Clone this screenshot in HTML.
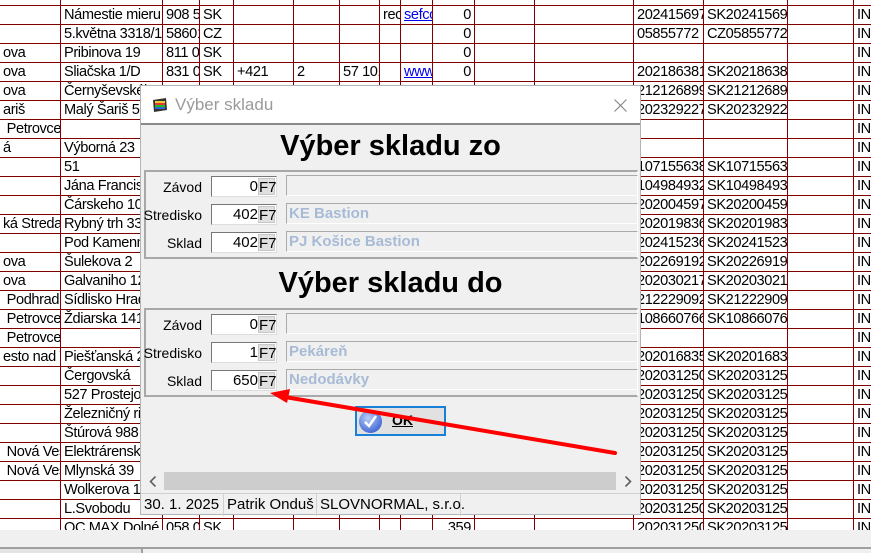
<!DOCTYPE html>
<html><head><meta charset="utf-8"><style>
*{margin:0;padding:0;box-sizing:border-box}
body{width:871px;height:553px;overflow:hidden;background:#fff;font-family:"Liberation Sans",sans-serif;position:relative}
table{position:absolute;left:-1px;top:-14px;width:894px;border-collapse:collapse;table-layout:fixed;font-size:14.6px;letter-spacing:-0.4px;color:#000}
td{border:1px solid #800000;height:19px;padding:0 0 0 3px;white-space:nowrap;overflow:hidden;line-height:17px}
td.r{text-align:right;padding:0 3px 0 0}
td.l a{color:#00e;text-decoration:underline}
#bot{position:absolute;left:0;top:530px;width:871px;height:23px;background:#f0f0f0}
#bot .ln{position:absolute;left:0;top:17px;width:871px;height:2px;background:#a0a0a0}
#bot .tb{position:absolute;left:0;top:19px;width:143px;height:4px;background:#e4e4e4;border-right:2px solid #a0a0a0}
#dlg{position:absolute;left:140px;top:85px;width:501px;height:430px;background:#f0f0f0;border:1px solid #b4b4b4}
#tt{position:absolute;left:0;top:0;width:499px;height:39px;background:#fff;border-bottom:2px solid #8a8a8a}
#tt span{position:absolute;left:34px;top:9px;font-size:17px;color:#9a9a9a}
h1{position:absolute;left:0;width:499px;text-align:center;font-size:29px;font-weight:bold;color:#000}
.grp{position:absolute;left:3px;width:494px;height:89px;border:2px solid #a8a8a8;border-right:1px solid #fff}
.lab{position:absolute;left:-4px;width:60px;text-align:right;font-size:14px;white-space:nowrap}
.in{position:absolute;left:65px;width:66px;height:21px;background:#fff;border:1px solid #777;border-right-color:#ddd;border-bottom-color:#ddd;font-size:15px;text-align:right;padding-right:18px;line-height:19px}
.in b{position:absolute;right:1px;top:1px;width:17px;height:17px;background:#e0e0e0;font-weight:normal;font-size:15px;line-height:17px;text-align:center;border:1px solid #c8c8c8}
.ds{position:absolute;left:140px;width:352px;height:21px;border:1px solid #aaa;border-right-color:#fff;border-bottom-color:#fff;font-size:15px;font-weight:bold;color:#a7bbd6;padding-left:2px;line-height:19px}
#ok{position:absolute;left:214px;top:320px;width:91px;height:30px;border:2px solid #1a7fd6;background:#e1e1e1}
#ok .c{position:absolute;left:2px;top:2px;width:23px;height:23px;border-radius:50%;background:radial-gradient(circle at 40% 35%,#b8cdf8,#4a6fd8 70%,#2c4aa8)}
#ok span{position:absolute;left:35px;top:4px;font-size:14px;font-weight:bold;text-decoration:underline}
#sb{position:absolute;left:1px;top:384px;width:497px;height:22px;background:#f0f0f0}
#sb .tr{position:absolute;left:22px;top:2px;width:452px;height:18px;background:#cdcdcd}
#st{position:absolute;left:0;top:407px;width:499px;height:22px;border-top:1px solid #d0d0d0;font-size:15px;line-height:22px;white-space:nowrap}
#st span{position:absolute;top:0;padding-left:3px;border-right:1px solid #d0d0d0;height:22px}
</style></head><body>
<table>
<colgroup><col style="width:61px"><col style="width:102px"><col style="width:37px"><col style="width:34px"><col style="width:60px"><col style="width:46px"><col style="width:40px"><col style="width:21px"><col style="width:32px"><col style="width:42px"><col style="width:60px"><col style="width:99px"><col style="width:70px"><col style="width:84px"><col style="width:66px"><col style="width:40px"></colgroup>
<tr><td>Petrovce</td><td>Grafická 12</td><td>900 1</td><td>SK</td><td></td><td></td><td></td><td></td><td></td><td class="r">0</td><td></td><td></td><td>2021456111</td><td>SK2021456111</td><td></td><td>INE</td></tr>
<tr><td></td><td>Námestie mieru 2</td><td>908 51</td><td>SK</td><td></td><td></td><td></td><td>rec</td><td class="l"><a>sefco</a></td><td class="r">0</td><td></td><td></td><td>2024156971</td><td>SK2024156970</td><td></td><td>INE</td></tr>
<tr><td></td><td>5.května 3318/16</td><td>58601</td><td>CZ</td><td></td><td></td><td></td><td></td><td></td><td class="r">0</td><td></td><td></td><td>05855772</td><td>CZ05855772</td><td></td><td>INE</td></tr>
<tr><td>ova</td><td>Pribinova 19</td><td>811 09</td><td>SK</td><td></td><td></td><td></td><td></td><td></td><td class="r">0</td><td></td><td></td><td></td><td></td><td></td><td>INE</td></tr>
<tr><td>ova</td><td>Sliačska 1/D</td><td>831 02</td><td>SK</td><td>+421</td><td>2</td><td>57 101</td><td></td><td class="l"><a>www</a></td><td class="r">0</td><td></td><td></td><td>2021863811</td><td>SK2021863811</td><td></td><td>INE</td></tr>
<tr><td>ova</td><td>Černyševského</td><td></td><td></td><td></td><td></td><td></td><td></td><td></td><td></td><td></td><td></td><td>2121268996</td><td>SK2121268996</td><td></td><td>INE</td></tr>
<tr><td>ariš</td><td>Malý Šariš 58</td><td></td><td></td><td></td><td></td><td></td><td></td><td></td><td></td><td></td><td></td><td>2023292271</td><td>SK2023292271</td><td></td><td>INE</td></tr>
<tr><td>&nbsp;Petrovce</td><td></td><td></td><td></td><td></td><td></td><td></td><td></td><td></td><td></td><td></td><td></td><td></td><td></td><td></td><td>INE</td></tr>
<tr><td>á</td><td>Výborná 23</td><td></td><td></td><td></td><td></td><td></td><td></td><td></td><td></td><td></td><td></td><td></td><td></td><td></td><td>INE</td></tr>
<tr><td></td><td>51</td><td></td><td></td><td></td><td></td><td></td><td></td><td></td><td></td><td></td><td></td><td>1071556387</td><td>SK1071556387</td><td></td><td>INE</td></tr>
<tr><td></td><td>Jána Francisci</td><td></td><td></td><td></td><td></td><td></td><td></td><td></td><td></td><td></td><td></td><td>1049849328</td><td>SK1049849328</td><td></td><td>INE</td></tr>
<tr><td></td><td>Čárskeho 10</td><td></td><td></td><td></td><td></td><td></td><td></td><td></td><td></td><td></td><td></td><td>2020045973</td><td>SK2020045973</td><td></td><td>INE</td></tr>
<tr><td>ká Streda</td><td>Rybný trh 333</td><td></td><td></td><td></td><td></td><td></td><td></td><td></td><td></td><td></td><td></td><td>2020198367</td><td>SK2020198367</td><td></td><td>INE</td></tr>
<tr><td></td><td>Pod Kamennou</td><td></td><td></td><td></td><td></td><td></td><td></td><td></td><td></td><td></td><td></td><td>2024152361</td><td>SK2024152361</td><td></td><td>INE</td></tr>
<tr><td>ova</td><td>Šulekova 2</td><td></td><td></td><td></td><td></td><td></td><td></td><td></td><td></td><td></td><td></td><td>2022691924</td><td>SK2022691924</td><td></td><td>INE</td></tr>
<tr><td>ova</td><td>Galvaniho 12</td><td></td><td></td><td></td><td></td><td></td><td></td><td></td><td></td><td></td><td></td><td>2020302174</td><td>SK2020302174</td><td></td><td>INE</td></tr>
<tr><td>&nbsp;Podhradie</td><td>Sídlisko Hrad</td><td></td><td></td><td></td><td></td><td></td><td></td><td></td><td></td><td></td><td></td><td>2122290929</td><td>SK2122290929</td><td></td><td>INE</td></tr>
<tr><td>&nbsp;Petrovce</td><td>Ždiarska 141/</td><td></td><td></td><td></td><td></td><td></td><td></td><td></td><td></td><td></td><td></td><td>1086607665</td><td>SK1086607665</td><td></td><td>INE</td></tr>
<tr><td>&nbsp;Petrovce</td><td></td><td></td><td></td><td></td><td></td><td></td><td></td><td></td><td></td><td></td><td></td><td></td><td></td><td></td><td>INE</td></tr>
<tr><td>esto nad V</td><td>Piešťanská 23</td><td></td><td></td><td></td><td></td><td></td><td></td><td></td><td></td><td></td><td></td><td>2020168359</td><td>SK2020168359</td><td></td><td>INE</td></tr>
<tr><td></td><td>Čergovská</td><td></td><td></td><td></td><td></td><td></td><td></td><td></td><td></td><td></td><td></td><td>2020312503</td><td>SK2020312503</td><td></td><td>INE</td></tr>
<tr><td></td><td>527 Prostejov</td><td></td><td></td><td></td><td></td><td></td><td></td><td></td><td></td><td></td><td></td><td>2020312503</td><td>SK2020312503</td><td></td><td>INE</td></tr>
<tr><td></td><td>Železničný ria</td><td></td><td></td><td></td><td></td><td></td><td></td><td></td><td></td><td></td><td></td><td>2020312503</td><td>SK2020312503</td><td></td><td>INE</td></tr>
<tr><td></td><td>Štúrová 988</td><td></td><td></td><td></td><td></td><td></td><td></td><td></td><td></td><td></td><td></td><td>2020312503</td><td>SK2020312503</td><td></td><td>INE</td></tr>
<tr><td>&nbsp;Nová Ves</td><td>Elektrárenská</td><td></td><td></td><td></td><td></td><td></td><td></td><td></td><td></td><td></td><td></td><td>2020312503</td><td>SK2020312503</td><td></td><td>INE</td></tr>
<tr><td>&nbsp;Nová Ves</td><td>Mlynská 39</td><td></td><td></td><td></td><td></td><td></td><td></td><td></td><td></td><td></td><td></td><td>2020312503</td><td>SK2020312503</td><td></td><td>INE</td></tr>
<tr><td></td><td>Wolkerova 15</td><td></td><td></td><td></td><td></td><td></td><td></td><td></td><td></td><td></td><td></td><td>2020312503</td><td>SK2020312503</td><td></td><td>INE</td></tr>
<tr><td></td><td>L.Svobodu</td><td></td><td></td><td></td><td></td><td></td><td></td><td></td><td></td><td></td><td></td><td>2020312503</td><td>SK2020312503</td><td></td><td>INE</td></tr>
<tr><td></td><td>OC MAX Dolné H</td><td>058 01</td><td>SK</td><td></td><td></td><td></td><td></td><td></td><td class="r">359</td><td></td><td></td><td>2020312503</td><td>SK2020312503</td><td></td><td>INE</td></tr>
</table>
<div id="bot"><div class="ln"></div><div class="tb"></div></div>

<div id="dlg">
 <div id="tt">
  <svg style="position:absolute;left:9px;top:9px" width="20" height="20" viewBox="0 0 20 20"><path d="M3 5 L16 3 L17 15 L4 17 Z" fill="#333"/><rect x="5" y="6" width="10" height="2" fill="#ec3"/><rect x="5" y="8" width="10" height="2" fill="#e33"/><rect x="5" y="10" width="10" height="2" fill="#2b2"/><rect x="5" y="12" width="10" height="2" fill="#36d"/></svg>
  <span>Výber skladu</span>
  <svg style="position:absolute;left:473px;top:13px" width="13" height="13" viewBox="0 0 13 13"><path d="M0.5 0.5 L12.5 12.5 M12.5 0.5 L0.5 12.5" stroke="#888" stroke-width="1.2"/></svg>
 </div>
 <h1 style="top:44px">Výber skladu zo</h1>
 <div class="grp" style="top:84px">
  <div class="lab" style="top:7px">Závod</div><div class="in" style="top:4px">0<b>F7</b></div><div class="ds" style="top:3px"></div>
  <div class="lab" style="top:35px">Stredisko</div><div class="in" style="top:32px">402<b>F7</b></div><div class="ds" style="top:31px">KE Bastion</div>
  <div class="lab" style="top:63px">Sklad</div><div class="in" style="top:60px">402<b>F7</b></div><div class="ds" style="top:59px">PJ Košice Bastion</div>
 </div>
 <h1 style="top:181px">Výber skladu do</h1>
 <div class="grp" style="top:222px">
  <div class="lab" style="top:7px">Závod</div><div class="in" style="top:4px">0<b>F7</b></div><div class="ds" style="top:3px"></div>
  <div class="lab" style="top:35px">Stredisko</div><div class="in" style="top:32px">1<b>F7</b></div><div class="ds" style="top:31px">Pekáreň</div>
  <div class="lab" style="top:63px">Sklad</div><div class="in" style="top:60px">650<b>F7</b></div><div class="ds" style="top:59px">Nedodávky</div>
 </div>
 <div id="ok"><div class="c"><svg width="23" height="23" viewBox="0 0 23 23"><path d="M6 12 L10 16 L17 6" stroke="#fff" stroke-width="2.5" fill="none"/></svg></div><span>OK</span></div>
 <div id="sb">
  <svg style="position:absolute;left:7px;top:6px" width="8" height="11" viewBox="0 0 8 11"><path d="M6.5 0.5 L1.5 5.5 L6.5 10.5" stroke="#606060" stroke-width="1.6" fill="none"/></svg>
  <div class="tr"></div>
  <svg style="position:absolute;left:482px;top:6px" width="8" height="11" viewBox="0 0 8 11"><path d="M1.5 0.5 L6.5 5.5 L1.5 10.5" stroke="#606060" stroke-width="1.6" fill="none"/></svg>
 </div>
 <div id="st"><span style="left:0;width:83px">30. 1. 2025</span><span style="left:83px;width:93px">Patrik Onduš</span><span style="left:176px;width:144px">SLOVNORMAL, s.r.o.</span></div>
</div>
<svg style="position:absolute;left:0;top:0" width="871" height="553"><line x1="615" y1="453" x2="285" y2="397" stroke="#f00" stroke-width="4" stroke-linecap="round"/><path d="M270 393 L290 389 L287 403 Z" fill="#f00"/></svg>
</body></html>
